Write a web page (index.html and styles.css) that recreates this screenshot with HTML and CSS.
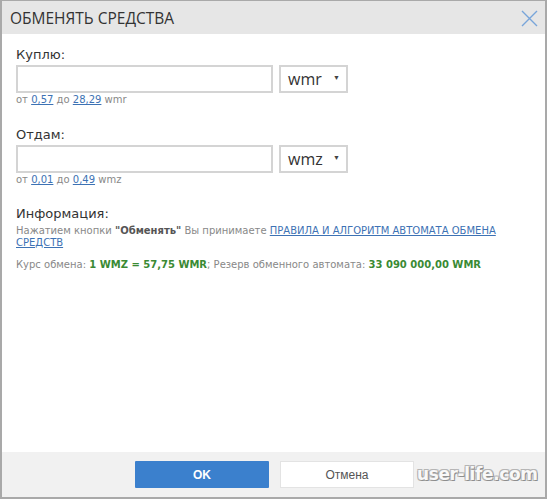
FILE: index.html
```html
<!DOCTYPE html>
<html lang="ru">
<head>
<meta charset="utf-8">
<title>Обменять средства</title>
<link rel="stylesheet" href="styles.css">
</head>
<body>
<div class="dialog">
  <div class="header">
    <span class="title">ОБМЕНЯТЬ СРЕДСТВА</span>
    <svg class="close" width="17" height="17" viewBox="0 0 17 17"><path d="M1 1 L16 16 M16 1 L1 16" stroke="#78a5da" stroke-width="1.4" fill="none"/></svg>
  </div>
  <div class="body">
    <div class="group">
      <div class="label">Куплю:</div>
      <div class="row">
        <div class="input"></div>
        <div class="select"><span>wmr</span><span class="arrow">▼</span></div>
      </div>
      <div class="hint">от <a href="#">0,57</a> до <a href="#">28,29</a> wmr</div>
    </div>
    <div class="group">
      <div class="label">Отдам:</div>
      <div class="row">
        <div class="input"></div>
        <div class="select"><span>wmz</span><span class="arrow">▼</span></div>
      </div>
      <div class="hint">от <a href="#">0,01</a> до <a href="#">0,49</a> wmz</div>
    </div>
    <div class="group">
      <div class="label">Информация:</div>
      <div class="info"><span class="line1">Нажатием кнопки <b>"Обменять"</b> Вы принимаете <a href="#">ПРАВИЛА И АЛГОРИТМ АВТОМАТА ОБМЕНА</a></span><span class="line2"><a href="#">СРЕДСТВ</a></span></div>
      <div class="rate">Курс обмена: <b class="green">1 WMZ = 57,75 WMR</b>; Резерв обменного автомата: <b class="green">33 090 000,00 WMR</b></div>
    </div>
  </div>
  <div class="footer">
    <div class="btn ok">OK</div>
    <div class="btn cancel">Отмена</div>
    <div class="watermark">user-life.com</div>
  </div>
</div>
</body>
</html>
```

FILE: styles.css
```css
* { box-sizing: border-box; }
html, body { margin: 0; padding: 0; background: #ffffff; }
body { width: 550px; height: 502px; }

.dialog {
  width: 547px;
  height: 499px;
  border: 2px solid #a9a9a9;
  border-top-width: 1px;
  display: flex;
  flex-direction: column;
  position: relative;
  background: #fff;
}

.header {
  height: 33px;
  background: #e6e6e6;
  display: flex;
  align-items: center;
  justify-content: space-between;
  padding: 0 7px 0 8px;
}
.title {
  font-family: "Open Sans", sans-serif;
  font-size: 15.5px;
  color: #333;
}
.close { display: block; margin-top: 1px; }

.body {
  flex: 1;
  padding: 13px 14px 0 14px;
  font-family: "DejaVu Sans", Verdana, sans-serif;
}
.group { margin-bottom: 21px; }
.group:nth-child(2) { margin-bottom: 20px; }

.label {
  font-size: 13px;
  line-height: 16px;
  color: #333;
}
.row {
  display: flex;
  gap: 6px;
  margin-top: 2px;
}
.input {
  width: 257px;
  height: 28px;
  border: 2px solid #d4d4d4;
  background: #fff;
}
.select {
  width: 69px;
  height: 28px;
  border: 2px solid #d4d4d4;
  display: flex;
  align-items: center;
  justify-content: space-between;
  padding: 0 6px 0 7px;
  font-family: "Open Sans", sans-serif;
  font-size: 16px;
  color: #333;
}
.arrow { font-size: 7px; color: #444; margin-top: -3px; }

.hint {
  margin-top: 1px;
  font-size: 10px;
  line-height: 12px;
  color: #888;
}
a { color: #3d72b4; text-decoration: underline; }

.info {
  margin-top: 3px;
  font-size: 10px;
  color: #888;
  display: flex;
  flex-direction: column;
}
.line1, .line2 { display: block; height: 12px; line-height: 12px; white-space: nowrap; }
.info b { color: #555; }
.rate {
  margin-top: 10px;
  font-size: 10px;
  line-height: 12px;
  color: #888;
}
.green { color: #3a8a34; }

.footer {
  height: 45px;
  background: #f1f1f1;
  display: flex;
  align-items: center;
  padding-left: 133px;
  gap: 11px;
  position: relative;
}
.btn {
  width: 134px;
  height: 27px;
  display: flex;
  align-items: center;
  justify-content: center;
  font-family: "Liberation Sans", Arial, sans-serif;
  font-size: 12px;
}
.ok {
  background: #3b80cd;
  color: #fff;
  font-weight: bold;
  border-radius: 1px;
}
.cancel {
  background: #fff;
  border: 1px solid #e3e3e3;
  color: #555;
}
.watermark {
  position: absolute;
  left: 415px;
  top: 12px;
  font-family: "DejaVu Sans", sans-serif;
  font-weight: bold;
  font-size: 17px;
  color: #f8f8f8;
  letter-spacing: -0.4px;
  text-shadow: 1px 1px 0 #8e8e8e, -1px -1px 0 #b5b5b5, 1px -1px 0 #b5b5b5, -1px 1px 0 #b5b5b5;
}
```
